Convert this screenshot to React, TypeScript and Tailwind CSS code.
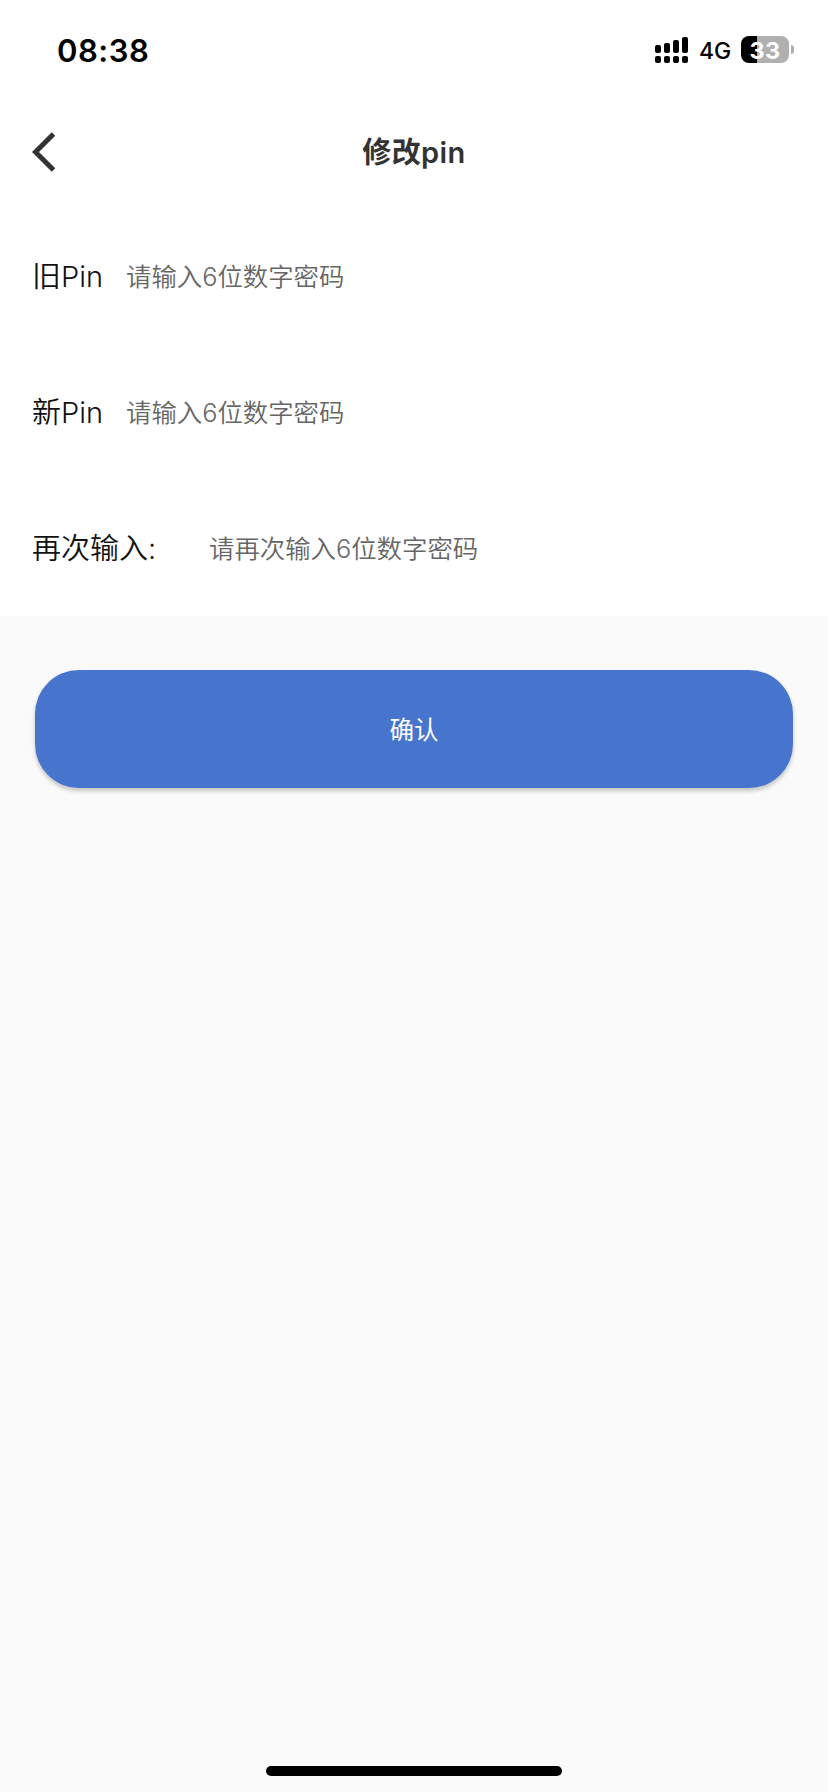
import React from 'react';

const cjk = "font-['Inter','Noto_Sans_CJK_SC',sans-serif]";

// 顶部状态栏
const StatusBar: React.FC = () => (
    <div className="flex h-[99px] items-center justify-between pl-[57px] pr-[34px]">
        <span className="pt-px text-[31px] leading-none font-semibold tracking-[0.5px] text-black">08:38</span>
        <div className="flex items-center">
            <svg width="34" height="28" viewBox="0 0 34 28" className="text-black" fill="currentColor">
                <rect x="0" y="9" width="6" height="8" rx="2" />
                <rect x="9" y="7" width="6" height="10" rx="2" />
                <rect x="18" y="4" width="6" height="13" rx="2" />
                <rect x="27" y="1" width="6" height="16" rx="2" />
                <rect x="0" y="20" width="6" height="7" rx="2" />
                <rect x="9" y="20" width="6" height="7" rx="2" />
                <rect x="18" y="20" width="6" height="7" rx="2" />
                <rect x="27" y="20" width="6" height="7" rx="2" />
            </svg>
            <span className="ml-[10px] w-[42px] pt-[3px] text-[23px] leading-none font-medium text-black">4G</span>
            <div className="flex h-[27px] w-[48px] items-center justify-center rounded-[8px] bg-[linear-gradient(to_right,#000_16px,#b0b0b0_16px)]">
                <span className="pt-[2px] text-[23.5px] leading-none font-bold tracking-[0.4px] text-white">33</span>
            </div>
            <div className="ml-[2px] h-[9px] w-[3px] rounded-r-full bg-[#b0b0b0]" />
        </div>
    </div>
);

// 导航栏
const NavBar: React.FC = () => (
    <div className="grid h-[109px] grid-cols-[1fr_auto_1fr] items-center px-8 pb-[3px]">
        <svg width="24" height="40" viewBox="0 0 24 40" fill="none" stroke="#333" strokeWidth="5">
            <path d="M21.5 2 L3.5 20 L21.5 38" />
        </svg>
        <h1 className="text-[29px] leading-none font-semibold tracking-[0.4px] text-[#333]">修改pin</h1>
    </div>
);

interface FieldProps {
    label: string;
    labelWidth: string;
    placeholder: string;
}

const Field: React.FC<FieldProps> = ({ label, labelWidth, placeholder }) => (
    <div className="flex h-[136px] items-center px-8">
        <span className={`${labelWidth} shrink-0 text-[29px] leading-none font-[350] text-[#111]`}>{label}</span>
        <span className="pt-[2px] text-[25.4px] leading-none font-[350] text-[#666]">{placeholder}</span>
    </div>
);

export default function App() {
    return (
        <div className={`${cjk} flex h-[1792px] w-[828px] flex-col bg-[#fafafa]`}>
            <div className="bg-white">
                <StatusBar />
                <NavBar />
                <Field label="旧Pin" labelWidth="w-[94px]" placeholder="请输入6位数字密码" />
                <Field label="新Pin" labelWidth="w-[94px]" placeholder="请输入6位数字密码" />
                <Field label="再次输入:" labelWidth="w-[177px]" placeholder="请再次输入6位数字密码" />
            </div>
            <button className="mx-[35px] mt-[54px] h-[118px] rounded-[44px] bg-[#4774cd] pt-[2px] text-[24.5px] leading-none text-white shadow-[0_3px_4px_rgba(0,0,0,0.22)]">
                确认
            </button>
            {/* 底部横条 */}
            <div className="mx-auto mt-auto mb-4 h-[10px] w-[296px] rounded-full bg-black" />
        </div>
    );
}
